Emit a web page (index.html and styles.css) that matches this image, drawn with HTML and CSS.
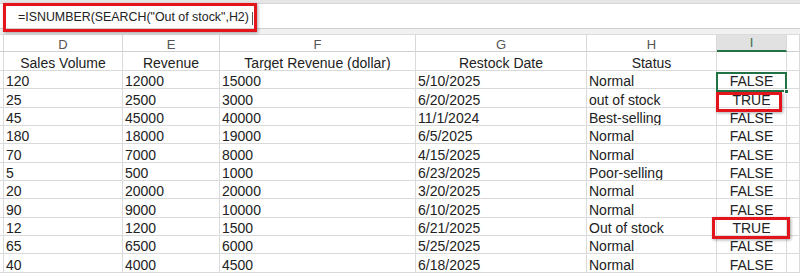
FILE: index.html
```html
<!DOCTYPE html>
<html lang="en">
<head>
    <meta charset="UTF-8">
    <title>Sheet - ISNUMBER SEARCH</title>
    <link rel="stylesheet" href="styles.css">
</head>
<body>
    <div class="sheet">
        <div class="toolbar-edge"></div>
        <div class="formula-bar">
            <span class="formula">=ISNUMBER(SEARCH("Out of stock",H2)</span><span class="caret"></span>
        </div>
        <div class="gap-band"></div>

        <div class="grid">
            <!-- column letters -->
            <div class="col-head"></div>
            <div class="col-head">D</div>
            <div class="col-head">E</div>
            <div class="col-head">F</div>
            <div class="col-head">G</div>
            <div class="col-head">H</div>
            <div class="col-head active">I</div>
            <div class="col-head"></div>

            <!-- header row -->
            <div class="cell"></div>
            <div class="cell center">Sales Volume</div>
            <div class="cell center">Revenue</div>
            <div class="cell center">Target Revenue (dollar)</div>
            <div class="cell center">Restock Date</div>
            <div class="cell center">Status</div>
            <div class="cell center"></div>
            <div class="cell"></div>
        </div>
        <div class="grid" id="rows"></div>

        <div class="selection"></div>
        <div class="fill-handle"></div>
        <div class="mark mark-formula"></div>
        <div class="mark mark-row2"></div>
        <div class="mark mark-row10"></div>
    </div>
    <script>
        // Sheet data: Sales Volume, Revenue, Target, Restock Date, Status
        const rows = [
            ['120', '12000', '15000', '5/10/2025', 'Normal'],
            ['25', '2500', '3000', '6/20/2025', 'out of stock'],
            ['45', '45000', '40000', '11/1/2024', 'Best-selling'],
            ['180', '18000', '19000', '6/5/2025', 'Normal'],
            ['70', '7000', '8000', '4/15/2025', 'Normal'],
            ['5', '500', '1000', '6/23/2025', 'Poor-selling'],
            ['20', '20000', '20000', '3/20/2025', 'Normal'],
            ['90', '9000', '10000', '6/10/2025', 'Normal'],
            ['12', '1200', '1500', '6/21/2025', 'Out of stock'],
            ['65', '6500', '6000', '5/25/2025', 'Normal'],
            ['40', '4000', '4500', '6/18/2025', 'Normal']
        ];
        const grid = document.getElementById('rows');
        function addCell(text, cls) {
            const div = document.createElement('div');
            div.className = 'cell' + (cls ? ' ' + cls : '');
            div.textContent = text;
            grid.appendChild(div);
        }
        rows.forEach(row => {
            addCell('');
            row.forEach(value => addCell(value));
            // same as =ISNUMBER(SEARCH("Out of stock",H))
            const found = row[4].toLowerCase().indexOf('out of stock') !== -1;
            addCell(found ? 'TRUE' : 'FALSE', 'center');
            addCell('');
        });
    </script>
</body>
</html>
```

FILE: styles.css
```css
* {
    margin: 0;
    padding: 0;
    box-sizing: border-box;
}
body {
    font-family: "Liberation Sans", Arial, sans-serif;
    background: #fff;
    color: #222;
    overflow: hidden;
}
.sheet {
    position: relative;
    width: 800px;
    height: 277px;
    overflow: hidden;
}
/* Formula bar */
.toolbar-edge {
    height: 4px;
    background: #e6e6e6;
    border-bottom: 1px solid #d6d6d6;
}
.formula-bar {
    height: 25px;
    background: #fff;
    border-bottom: 1px solid #cfcfcf;
    padding-left: 18px;
    display: flex;
    align-items: flex-end;
    font-size: 12.4px;
    line-height: 12px;
    padding-bottom: 5px;
    color: #222;
}
.caret {
    display: inline-block;
    width: 1px;
    height: 13px;
    margin-left: 3px;
    background: #555;
    margin-bottom: -2px;
}
.gap-band {
    height: 6px;
    background: #f1f1f1;
    border-bottom: 1px solid #dcdcdc;
}
/* Grid */
.grid {
    display: grid;
    grid-template-columns: 4px 119px 97px 196px 171px 130px 70px 1fr;
}
#rows {
    grid-auto-rows: 18.34px;
}
.col-head {
    height: 17px;
    border-right: 1px solid #d8d8d8;
    border-bottom: 1px solid #cfcfcf;
    background: #fff;
    color: #555;
    font-size: 13px;
    line-height: 12px;
    display: flex;
    align-items: flex-end;
    justify-content: center;
}
.col-head.active {
    background: #e1e1e1;
    border-bottom: 2px solid #217346;
    color: #3d6b4f;
    line-height: 14px;
}
.cell {
    height: 19px;
    border-right: 1px solid #dadada;
    border-bottom: 1px solid #dadada;
    font-size: 14px;
    line-height: 14px;
    display: flex;
    align-items: flex-end;
    padding-left: 2px;
    white-space: nowrap;
    overflow: hidden;
}
#rows .cell {
    height: auto;
}
.cell.center {
    justify-content: center;
    padding-left: 0;
}
/* Active cell and annotation boxes */
.selection {
    position: absolute;
    left: 716px;
    top: 72px;
    width: 71px;
    height: 20px;
    border: 2px solid #217346;
}
.fill-handle {
    position: absolute;
    left: 784px;
    top: 89px;
    width: 5px;
    height: 5px;
    background: #217346;
    border: 1px solid #fff;
}
.mark {
    position: absolute;
    border: 3px solid #e3141b;
    box-shadow: 1px 1px 3px rgba(0,0,0,0.35);
}
.mark-formula {
    left: 3px;
    top: 3px;
    width: 254px;
    height: 29px;
}
.mark-row2 {
    left: 716px;
    top: 92px;
    width: 66px;
    height: 20px;
}
.mark-row10 {
    left: 712px;
    top: 217px;
    width: 78px;
    height: 22px;
}
```
